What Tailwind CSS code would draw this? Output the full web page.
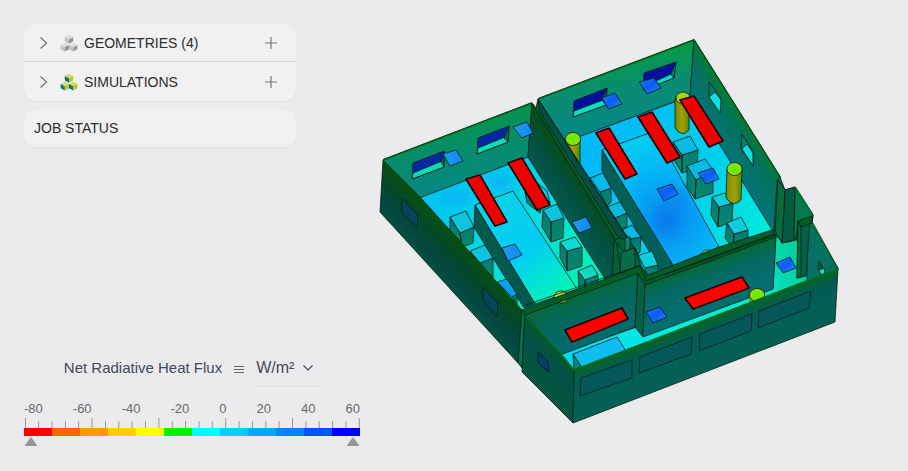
<!DOCTYPE html>
<html lang="en">
<head>
<meta charset="utf-8">
<meta name="viewport" content="width=device-width, initial-scale=1">
<title>Net Radiative Heat Flux</title>
<script src="https://cdn.jsdelivr.net/npm/@tailwindcss/browser@4"></script>
</head>
<body class="flex min-h-screen bg-[#ebebed] font-['Liberation_Sans',Arial,sans-serif] text-[#2c2c2c]">

<aside class="flex w-[360px] shrink-0 flex-col justify-between pt-6 pb-[25px] pl-6">
  <nav class="mr-16 flex flex-col gap-2" aria-label="Project">
    <div class="divide-y divide-[#d9d9db] rounded-xl bg-[#f1f1f1] shadow-xs">
      <div class="flex h-[38px] items-center px-3">
        <button class="flex grow items-center text-left text-sm" aria-expanded="false">
          <svg class="mr-2 h-4 w-4" viewBox="0 0 16 16" fill="none" stroke="#777" stroke-width="1.300"><path d="M4.500 2.500l6 5.500-6 5.500"/></svg>
          <svg class="mr-1.5 h-[18px] w-[18px]" viewBox="0 0 18 18">
            <path fill="#dedede" d="M9 .8l4.200 2.100L9 5.200 4.800 2.900zM4.800 8.800L9 11l-4.200 2.300L.6 11zM13.200 8.800l4.200 2.200-4.200 2.300L9 11z"/>
            <path fill="#c2c2c2" d="M4.800 2.900L9 5.200v4.500L4.800 7.600zM.6 11l4.200 2.300v4.200L.6 15.300zM9 11l4.200 2.300v4.200L9 15.300z"/>
            <path fill="#979797" d="M13.200 2.900v4.700L9 9.700V5.200zM9 11v4.300l-4.200 2.200v-4.200zM17.400 11v4.300l-4.200 2.200v-4.200z"/>
          </svg>
          GEOMETRIES (4)
        </button>
        <button class="h-6 w-6" aria-label="Add geometry">
          <svg class="h-6 w-6" viewBox="0 0 24 24" stroke="#777" stroke-width="1.200"><path d="M11 6v12M5 12h12"/></svg>
        </button>
      </div>
      <div class="flex h-[39px] items-center px-3">
        <button class="flex grow items-center text-left text-sm" aria-expanded="false">
          <svg class="mr-2 h-4 w-4" viewBox="0 0 16 16" fill="none" stroke="#777" stroke-width="1.300"><path d="M4.500 2.500l6 5.500-6 5.500"/></svg>
          <svg class="mr-1.5 h-[18px] w-[18px]" viewBox="0 0 18 18">
            <path fill="#d6e04a" d="M9 .8l4.200 2.100L9 5.200 4.800 2.900zM4.800 8.800L9 11l-4.200 2.300L.6 11zM13.200 8.800l4.200 2.200-4.200 2.300L9 11z"/>
            <path fill="#12708f" d="M4.800 2.900L9 5.200v4.500L4.800 7.600zM.6 11l4.200 2.300v4.200L.6 15.300zM9 11l4.200 2.300v4.200L9 15.300z"/>
            <path fill="#b2c52a" d="M13.200 2.900v4.700L9 9.700V5.200zM9 11v4.300l-4.200 2.200v-4.200zM17.400 11v4.300l-4.200 2.200v-4.200z"/>
          </svg>
          SIMULATIONS
        </button>
        <button class="h-6 w-6" aria-label="Add simulation">
          <svg class="h-6 w-6" viewBox="0 0 24 24" stroke="#777" stroke-width="1.200"><path d="M11 6v12M5 12h12"/></svg>
        </button>
      </div>
    </div>
    <button class="h-[38px] rounded-xl bg-[#f1f1f1] px-2.5 text-left text-sm shadow-xs">JOB STATUS</button>
  </nav>

  <section aria-label="Color legend">
    <div class="flex items-center justify-center text-[15px] text-[#45485a]">
      <label for="unit">Net Radiative Heat Flux</label>
      <button class="mx-3 h-3 w-2.5" aria-label="Legend options">
        <svg class="block h-3 w-2.5" viewBox="0 0 10 12" stroke="#666" stroke-width="1"><path d="M0 3.500h10M0 6.500h10M0 9.500h10"/></svg>
      </button>
      <div class="grid items-center border-b border-[#e0e0e3]">
        <select id="unit" class="col-start-1 row-start-1 h-9 w-16 appearance-none bg-transparent text-base">
          <option>W/m²</option>
          <option>kW/m²</option>
        </select>
        <svg class="pointer-events-none col-start-1 row-start-1 mr-1.5 h-3 w-3 justify-self-end" viewBox="0 0 12 12" fill="none" stroke="#45485a" stroke-width="1.200"><path d="M1.500 3.500L6 8l4.500-4.500"/></svg>
      </div>
    </div>
    <div class="mt-4 flex justify-between text-[13px] leading-3 text-[#6a6a6a]">
      <span>-80</span><span>-60</span><span>-40</span><span>-20</span><span>0</span><span>20</span><span>40</span><span>60</span>
    </div>
    <svg class="mt-px block h-3 w-full" viewBox="0 0 336 12" preserveAspectRatio="none" stroke="#999">
      <path d="M1.500 2v10M68.100 2v10M134.900 2v10M201.700 2v10M268.500 2v10M335.300 2v10"/>
      <path d="M14.700 5v7M28 5v7M41.400 5v7M54.700 5v7M81.500 5v7M94.800 5v7M108.200 5v7M121.500 5v7M148.300 5v7M161.600 5v7M175 5v7M188.300 5v7M215.100 5v7M228.400 5v7M241.800 5v7M255.100 5v7M281.900 5v7M295.200 5v7M308.600 5v7M321.900 5v7"/>
    </svg>
    <div class="flex h-2">
      <i class="grow bg-[#ff0000]"></i><i class="grow bg-[#ff6600]"></i><i class="grow bg-[#ff9900]"></i><i class="grow bg-[#ffcc00]"></i><i class="grow bg-[#ffff00]"></i><i class="grow bg-[#00f000]"></i><i class="grow bg-[#00ffff]"></i><i class="grow bg-[#00d0ff]"></i><i class="grow bg-[#00a8ff]"></i><i class="grow bg-[#0084ff]"></i><i class="grow bg-[#0055ff]"></i><i class="grow bg-[#0000ff]"></i>
    </div>
    <div class="flex justify-between pt-px">
      <button aria-label="Lower limit"><svg class="block h-[9px] w-[14px]" viewBox="0 0 14 9"><path d="M7 0l6.500 9H.5z" fill="#97979b"/></svg></button>
      <button aria-label="Upper limit"><svg class="block h-[9px] w-[14px]" viewBox="0 0 14 9"><path d="M7 0l6.500 9H.5z" fill="#97979b"/></svg></button>
    </div>
  </section>
</aside>

<main class="h-screen grow">
<svg class="h-full w-full" viewBox="360 0 548 471" role="img" aria-label="Heat flux model" stroke="#041f18" stroke-width=".8" stroke-linejoin="round">
  <defs>
    <linearGradient id="back" x1=".35" y1="0" x2=".6" y2="1"><stop offset=".15" stop-color="#049449"/><stop offset=".55" stop-color="#078c6d"/><stop offset="1" stop-color="#05878a"/></linearGradient>
    <linearGradient id="back2" x1=".35" y1="0" x2=".6" y2="1"><stop offset=".15" stop-color="#039b42"/><stop offset=".5" stop-color="#0a8c72"/><stop offset="1" stop-color="#04848d"/></linearGradient>
    <linearGradient id="left" gradientUnits="userSpaceOnUse" x1="452" y1="235" x2="422" y2="263"><stop offset="0" stop-color="#04500f"/><stop offset=".35" stop-color="#03482c"/><stop offset=".7" stop-color="#034742"/><stop offset="1" stop-color="#04543a"/></linearGradient>
    <linearGradient id="mid" gradientUnits="userSpaceOnUse" x1="580" y1="180" x2="555" y2="197"><stop offset="0" stop-color="#044d1c"/><stop offset=".5" stop-color="#035040"/><stop offset="1" stop-color="#04584d"/></linearGradient>
    <linearGradient id="right" gradientUnits="userSpaceOnUse" x1="740" y1="110" x2="712" y2="128"><stop offset="0" stop-color="#047e2e"/><stop offset=".35" stop-color="#03725a"/><stop offset="1" stop-color="#037378"/></linearGradient>
    <linearGradient id="front" gradientUnits="userSpaceOnUse" x1="706" y1="319" x2="724" y2="366"><stop offset="0" stop-color="#046620"/><stop offset=".25" stop-color="#035a55"/><stop offset=".6" stop-color="#036057"/><stop offset="1" stop-color="#046053"/></linearGradient>
    <linearGradient id="side" gradientUnits="userSpaceOnUse" x1="555" y1="345" x2="535" y2="365"><stop offset="0" stop-color="#04582a"/><stop offset=".6" stop-color="#03504a"/><stop offset="1" stop-color="#04553f"/></linearGradient>
    <linearGradient id="inner" gradientUnits="userSpaceOnUse" x1="690" y1="268" x2="703" y2="305"><stop offset="0" stop-color="#046938"/><stop offset=".4" stop-color="#046a64"/><stop offset="1" stop-color="#046d70"/></linearGradient>
    <linearGradient id="inner2" gradientUnits="userSpaceOnUse" x1="580" y1="292" x2="597" y2="335"><stop offset="0" stop-color="#046938"/><stop offset=".4" stop-color="#04685a"/><stop offset="1" stop-color="#046a6c"/></linearGradient>
    <linearGradient id="box" x1="0" y1="0" x2="0" y2="1"><stop offset="0" stop-color="#047778"/><stop offset="1" stop-color="#068a6a"/></linearGradient>
    <linearGradient id="cyl" x1="0" x2="1"><stop offset="0" stop-color="#6f8b00"/><stop offset=".5" stop-color="#a99d03"/><stop offset="1" stop-color="#528c04"/></linearGradient>
    <radialGradient id="cap"><stop offset="0" stop-color="#4ef000"/><stop offset=".6" stop-color="#7ee600"/><stop offset="1" stop-color="#b4d80e"/></radialGradient>
    <linearGradient id="floorA" gradientUnits="userSpaceOnUse" x1="470" y1="180" x2="570" y2="300"><stop offset="0" stop-color="#02c5f0"/><stop offset=".5" stop-color="#03dfdc"/><stop offset="1" stop-color="#03f2b2"/></linearGradient>
    <linearGradient id="deskA" gradientUnits="userSpaceOnUse" x1="490" y1="200" x2="560" y2="295"><stop offset="0" stop-color="#0bd0e8"/><stop offset=".55" stop-color="#03cff2"/><stop offset="1" stop-color="#03f3b8"/></linearGradient>
    <linearGradient id="floorB" gradientUnits="userSpaceOnUse" x1="600" y1="140" x2="770" y2="240"><stop offset="0" stop-color="#03b9f6"/><stop offset=".6" stop-color="#02d2ea"/><stop offset="1" stop-color="#03ecdb"/></linearGradient>
    <radialGradient id="deskB" gradientUnits="userSpaceOnUse" cx="668" cy="219" r="80"><stop offset="0" stop-color="#087eec"/><stop offset=".25" stop-color="#0898f3"/><stop offset=".6" stop-color="#04b4f6"/><stop offset="1" stop-color="#05cbf0"/></radialGradient>
    <linearGradient id="floorC" gradientUnits="userSpaceOnUse" x1="570" y1="365" x2="810" y2="270"><stop offset="0" stop-color="#04d9ef"/><stop offset=".4" stop-color="#04ecdf"/><stop offset=".8" stop-color="#05e8cc"/><stop offset="1" stop-color="#08cb94"/></linearGradient>
    <linearGradient id="blue" x1="0" x2="1" y1="0" y2="1"><stop offset="0" stop-color="#1c7bf3"/><stop offset=".5" stop-color="#0b5cf8"/><stop offset="1" stop-color="#278cf0"/></linearGradient>
    <linearGradient id="sky" x1="0" x2="1"><stop offset="0" stop-color="#229cf0"/><stop offset="1" stop-color="#0f88f4"/></linearGradient>
    <filter id="soft" x="-50%" y="-50%" width="200%" height="200%"><feGaussianBlur stdDeviation="4"/></filter>
    <clipPath id="clipA"><path d="M420 197L528 157L606 279L522 310z"/></clipPath>
    <clipPath id="clipB"><path d="M565 141L691 96L775 232L664 274L627 238z"/></clipPath>
  </defs>

  <!-- room A -->
  <path fill="url(#floorA)" d="M417 197L528 157L612 279L524 315L516 308z"/>
  <g clip-path="url(#clipA)" stroke="none"><g filter="url(#soft)"><ellipse cx="455" cy="198" rx="14" ry="5" fill="#0ab2f4"/><ellipse cx="500" cy="183" rx="12" ry="7" fill="#08b4f5"/></g></g>
  <path fill="url(#back)" d="M383 160L532 103L528 157L419 198z"/>
  <path fill="#0527a0" d="M413 163L444 151V167L412 179z"/><path fill="#0bdcb8" d="M413 173L442 161L444 167L412 179z"/><path fill="#08705f" d="M444 151V167L441 162z"/>
  <path fill="#0527a0" d="M478 138L509 126L508 142L477 154z"/><path fill="#0bdcb8" d="M478 148L505 137L508 142L477 154z"/><path fill="#08705f" d="M509 126L508 142L504 138z"/>
  <path fill="url(#deskA)" d="M475 205L513 191L577 289L535 304z"/>
  <path fill="#04594e" d="M475 205L535 304L524 308L474 227z"/>
  <g fill="url(#box)">
    <path d="M450 217L460 233L462 247L450 231zM460 233L474 227L473 243L462 247z"/>
    <path d="M480 263L493 258V278L470 252z"/>
    <path d="M512 297L517 294V304z"/>
    <path d="M525 192L542 205L540 213L527 203z"/>
    <path d="M543 210L551 222V242L542 227zM551 222L564 218L563 238L551 242z"/>
    <path d="M560 242L567 251V271L560 258zM567 251L582 247V266L567 271z"/>
    <path d="M578 271L585 280V290L579 289zM585 280L598 275V285L585 290z"/>
  </g>
  <g fill="#0dc4dc">
    <path d="M450 217L466 211L474 227L460 233z"/><path d="M470 251L485 245L493 258L480 263z"/>
    <path fill="#0b9df2" d="M497 282L507 279L517 294L512 297z"/>
    <path d="M537 183L547 191L550 203L544 200z"/>
    <path d="M543 210L557 204L564 218L551 222z"/><path fill="#10d8d4" d="M560 242L575 237L582 247L567 251z"/><path fill="#10d8bc" d="M578 271L592 265L598 275L585 280z"/>
  </g>
  <path fill="url(#mid)" d="M532 103L617 242L613 278L605 279L528 157z"/>
  <path fill="url(#left)" d="M383 160L420 197L522 310L518 363L380 212z"/>
  <g fill="#044658"><path d="M402 198L418 215L417 228L402 213z"/><path d="M483 287L498 303L497 317L483 301z"/></g>

  <!-- room B -->
  <path fill="url(#floorB)" d="M565 141L691 96L775 232L780 240L645 284L627 250z"/>
  <path fill="url(#back2)" d="M538 99L694 40L690 96L565 142z"/>
  <path fill="#03119a" d="M574 101L607 88L606 105L573 117z"/><path fill="#0bdcc8" d="M574 111L603 100L606 105L573 117z"/><path fill="#08705f" d="M607 88L606 105L602 100z"/>
  <path fill="#03119a" d="M644 73L676 62L674 78L643 90z"/><path fill="#0bdcc8" d="M656 81L671 74L674 78L656 85z"/><path fill="#08856f" d="M676 62L674 78L671 74z"/>
  <path fill="url(#right)" d="M694 40L780 177L777 233H774L690 96z"/>
  <path fill="#067c61" d="M709 82L721 98L720 113L709 97z"/><path fill="#0ae0e0" d="M709 97L715 92L721 100L720 113z"/>
  <path fill="#067c61" d="M742 134L753 151V166L741 149z"/><path fill="#0ae0e0" d="M742 149L747 144L753 153V166z"/>
  <path fill="url(#deskB)" d="M602 150L655 131L719 247L673 267z"/>
  <g clip-path="url(#clipB)" stroke="none" fill="#0874e9" opacity=".4"><g filter="url(#soft)"><ellipse cx="664" cy="222" rx="11" ry="15"/><ellipse cx="676" cy="200" rx="8" ry="10"/></g></g>
  <path fill="#046056" d="M602 150L673 265L662 273L602 171z"/>
  <g fill="url(#box)">
    <path d="M600 192L611 188V202L607 206z"/><path d="M615 218L627 213V227L620 229z"/><path d="M630 239L641 237L640 252L636 256z"/><path d="M645 268L658 265V274L646 276z"/>
    <path d="M673 142L682 155V173L674 160zM682 155L698 150L697 168L682 173z"/>
    <path d="M687 166L696 180L695 199L687 187zM696 180L713 170V193L695 199z"/>
    <path d="M712 197L719 207L718 227L711 215zM719 207L733 203L732 222L718 227z"/>
    <path d="M727 223L734 234L733 248L725 238zM734 234L748 230V242L733 248z"/>
  </g>
  <g fill="#08b9e4">
    <path d="M590 178L603 173L611 188L600 192z"/><path d="M607 207L620 202L627 213L615 218z"/><path d="M622 230L632 225L641 237L630 239z"/><path fill="#0dcfdd" d="M637 256L652 251L658 265L645 268z"/>
    <path d="M673 142L690 136L698 150L682 155z"/><path d="M687 166L705 159L713 170L696 180z"/>
    <path fill="#0dcfdd" d="M712 197L725 193L733 203L719 207zM727 223L741 217L748 230L734 234z"/>
  </g>
  <path fill="url(#cyl)" d="M566 140V160L580 170V140z"/><ellipse cx="573" cy="139" rx="7.500" ry="6.500" fill="url(#cap)"/>
  <path fill="url(#cyl)" d="M675 98V128Q682 138 689 130V98z"/><ellipse cx="683" cy="98" rx="7" ry="6" fill="#a5d40b"/>
  <path fill="url(#cyl)" d="M727 170L726 198Q733 208 741 200L742 170z"/><ellipse cx="734.500" cy="169" rx="7.500" ry="6.500" fill="url(#cap)"/>
  <!-- partition between A and B -->
  <path fill="#056022" d="M538 99L566 142L628 238L624 250L617 242L532 103L536 108z"/>
  <path fill="#045044" d="M538 99L546 112L628 240V248L620 240L540 112z"/>
  <path fill="#05603a" d="M614 242L618 238L628 240L636 250L641 266L632 280H612z"/>
  <path fill="#066c49" d="M617 243L623 252L635 248V268L621 275z"/>
  <path fill="#07866b" d="M625 238L630 237V249L625 251z"/>
  <path fill="none" d="M621 252L620 277M635 248L642 263"/>

  <!-- room C -->
  <path fill="url(#floorC)" d="M558 353L643 325L773 288L776 234L795 232L838 269L574 373z"/>
  <path fill="url(#inner2)" d="M525 314L638 271L635 327L560 355z"/>
  <path fill="#046145" d="M638 271L645 282L643 337L635 327z"/>
  <path fill="url(#inner)" d="M645 283L776 235L773 289L643 337z"/>
  <ellipse cx="561" cy="297" rx="7" ry="6" fill="#c0d813"/><ellipse cx="708" cy="256" rx="7" ry="6" fill="#b5dc12"/>
  <path fill="#045d25" d="M522 310L640 266L647 276L774 230L776 237L645 285L638 273L525 315z"/>
  <path fill="#055d2c" d="M640 266L648 275L664 269L719 247L775 229L774 234L646 281z"/>
  <path fill="none" d="M523 306L641 265L647 276M664 275L775 235"/>
  <path fill="#057148" d="M522 310L525 314L522 368L518 363z"/>
  <path fill="#06685b" d="M777 180L780 177L785 190L782 242L774 233z"/>
  <path fill="#04704d" d="M785 190L795 187L813 215L812 224L798 225L797 240L782 243L780 235z"/>
  <path fill="#035b42" d="M785 190L795 187L794 240L782 243z"/>
  <path fill="#056c3a" d="M778 180L785 190L782 243L775 231z"/>
  <path fill="#05764d" d="M795 187L813 215L812 224L798 221L796 240L794 237z"/>
  <path fill="#047163" d="M809 220L812 223L838 269L807 281V262z"/>
  <path fill="#036049" d="M798 222L810 218L806 276L797 278z"/><path fill="#046c3c" d="M798 222L801 226V277L797 278z"/><path fill="#045e24" d="M798 221L812 216V223L801 227z"/>
  <path fill="#055f42" d="M819 261L823 268L821 272L818 268z"/><path fill="#19dcb4" d="M819 270L824 268L825 273L821 275z"/>
  <path fill="#10bdf0" d="M573 354L617 337L626 351L576 370z"/><path fill="#04857c" d="M573 354L581 366L574 370z"/>
  <path fill="#759c04" stroke="none" d="M749 296h15v7l-14 5z"/><ellipse cx="757" cy="295" rx="7.500" ry="6.500" fill="url(#cap)"/>
  <path fill="url(#side)" d="M525 314L560 353L574 370L573 423L522 372z"/>
  <path fill="url(#front)" d="M574 370L838 269L835 322L573 423z"/>
  <path fill="none" stroke="#067020" stroke-width="1.500" d="M383 160L532 103M538 99L694 40L780 177M795 187L813 215M812 224L838 269L574 370L560 353L525 315"/>
  <path fill="none" stroke="#062b16" stroke-width=".7" d="M383 159.500L532 102.500M538 98.500L694 39.500L780.500 177M813 223L838.500 269"/>
  <path fill="#063d69" d="M538 352L548 361L549 372L538 363z"/>
  <g fill="#04585a"><path d="M581 378L632 360V378L580 396z"/><path d="M640 357L692 337L691 354L639 373z"/><path d="M700 334L752 314L751 331L699 351z"/><path d="M759 311L811 291L809 308L758 328z"/></g>

  <!-- heaters -->
  <g fill="#eb0300" stroke="#220000" stroke-width="1.600">
    <path d="M466 179L480 175L507 222L495 226z"/><path d="M508 163L522 158L550 205L537 210z"/>
    <path d="M596 133L609 128L637 174L625 179z"/><path d="M638 117L652 112L680 157L667 163z"/><path d="M680 100L694 96L723 141L709 147z"/>
    <path fill="#fc0300" d="M565 330L622 308L628 319L572 342z"/><path fill="#fc0300" d="M685 298L742 277L749 288L693 309z"/>
  </g>
  <!-- ceiling vents -->
  <g fill="url(#blue)">
    <path fill="url(#sky)" d="M443 154L456 150L463 161L450 166z"/><path fill="url(#sky)" d="M513 127L527 122L533 133L522 138z"/>
    <path d="M602 98L615 93L622 104L608 109z"/><path d="M639 82L654 78L661 88L647 94z"/>
    <path fill="url(#sky)" d="M502 248L515 244L522 255L508 261z"/><path fill="url(#sky)" d="M572 222L586 217L592 228L579 233z"/>
    <path d="M657 189L672 184L678 194L664 201z"/><path d="M698 173L713 168L719 179L706 184z"/>
    <path d="M776 263L790 257L796 268L783 273z"/><path d="M646 312L660 307L667 317L653 323z"/>
  </g>
</svg>
</main>
</body>
</html>
